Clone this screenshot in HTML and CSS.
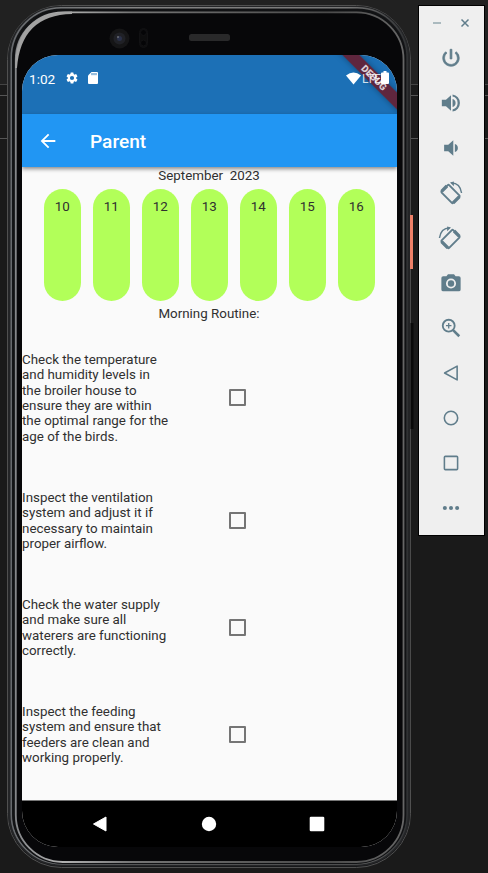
FILE: index.html
```html
<!DOCTYPE html>
<html lang="en">
<head>
<meta charset="utf-8">
<title>Parent</title>
<link rel="stylesheet" href="styles.css">
</head>
<body>
<div class="desktop">
  <div class="phone">
    <svg class="frame" width="414" height="873" viewBox="0 0 414 873" fill="none">
      <defs>
        <linearGradient id="shine" x1="0" y1="0" x2="1" y2="0">
          <stop offset="0" stop-color="#85878a"/><stop offset=".12" stop-color="#b2b2b2"/><stop offset=".3" stop-color="#757575"/><stop offset=".8" stop-color="#4a4a4a"/><stop offset="1" stop-color="#666"/>
        </linearGradient>
        <linearGradient id="rim" x1="0" y1="0" x2="1" y2="0">
          <stop offset="0" stop-color="#66696d"/><stop offset=".3" stop-color="#858585"/><stop offset=".85" stop-color="#777"/><stop offset="1" stop-color="#303234"/>
        </linearGradient>
      </defs>
      <rect x="7.500" y="5.500" width="403" height="862" rx="54" fill="#17181a" stroke="#505050"/>
      <rect x="9" y="7" width="400" height="858" rx="52" stroke="#242527" stroke-width="2"/>
      <rect x="11.200" y="7.700" width="396" height="856" rx="50" stroke="url(#rim)" stroke-width="1.600"/>
      <rect x="13.500" y="10" width="391.500" height="853" rx="49" stroke="#111214" stroke-width="2"/>
      <rect x="15.800" y="12.300" width="387.700" height="849.700" rx="47" fill="#070709" stroke="url(#shine)" stroke-width="1.800"/>
      <path d="M15 68Q15 11.500 72 11.500V14Q21 15 17 68z" fill="#a2a2a2"/>
      <circle cx="119.500" cy="38.500" r="10" fill="#151516"/>
      <circle cx="119.500" cy="38.500" r="6" fill="#202126"/>
      <circle cx="119.500" cy="38.500" r="2.500" fill="#2a3048"/>
      <circle cx="118" cy="37" r=".8" fill="#999"/>
      <rect x="139.500" y="28.500" width="8" height="19" rx="4" fill="#0d0d0e" stroke="#111113"/>
      <circle cx="143.500" cy="32.500" r="3" fill="#050507" stroke="#121214"/>
      <circle cx="143.500" cy="43" r="3" fill="#050507" stroke="#121214"/>
      <rect x="189" y="34" width="41" height="7" rx="2.500" fill="#29292a"/>
      <path d="M410.500 80v710" stroke="#4b4b4b"/>
      <path d="M412 323v106" stroke="#090909" stroke-width="3"/>
    </svg>
    <span class="power-key"></span>
    <main class="screen">
      <header class="status">
        <span class="clock">1:02</span>
        <svg class="gear" width="14" height="14" viewBox="0 0 24 24" fill="#fff"><path d="M19.140 12.940a7 7 0 0 0 0-1.880l2.030-1.580a.5.5 0 0 0 .12-.61l-1.920-3.320a.5.5 0 0 0-.59-.22l-2.390.96a7 7 0 0 0-1.620-.94L14.400 2.810a.5.5 0 0 0-.48-.41h-3.840a.5.5 0 0 0-.47.41L9.250 5.350a7 7 0 0 0-1.620.94l-2.390-.96a.5.5 0 0 0-.59.22L2.740 8.870a.5.5 0 0 0 .12.61l2.030 1.580a7 7 0 0 0 0 1.880l-2.030 1.580a.5.5 0 0 0-.12.61l1.920 3.320c.12.22.37.29.59.22l2.390-.96c.5.380 1.030.7 1.620.94l.36 2.540c.05.24.24.41.48.41h3.840c.24 0 .44-.17.47-.41l.36-2.540a7 7 0 0 0 1.620-.94l2.390.96c.22.08.47 0 .59-.22l1.920-3.320a.5.5 0 0 0-.12-.61zM12 15.600a3.600 3.600 0 1 1 0-7.200 3.600 3.600 0 0 1 0 7.200z"/></svg>
        <svg class="sd" width="10" height="12" viewBox="0 0 10 12"><path d="M3.500 0H9q1 0 1 1v10q0 1-1 1H1q-1 0-1-1V3.500z" fill="#fff"/><path d="M4 1v2.200M6 1v2.200M8 1v2.200" stroke="#1c70b6" stroke-width=".9"/></svg>
        <span class="signals">
          <svg width="15" height="13" viewBox="0 0 15 13"><path d="M0 3.500Q7.500-2.500 15 3.500L7.500 12.500z" fill="#fff"/></svg>
          <span class="lte">LTE</span>
          <svg class="battery" width="8" height="13" viewBox="0 0 8 13"><path d="M2.500 0h3v1.500H7q1 0 1 1V12q0 1-1 1H1q-1 0-1-1V2.500q0-1 1-1h1.500z" fill="#fff"/></svg>
        </span>
        <span class="debug">DEBUG</span>
      </header>
      <nav class="appbar">
        <svg width="22" height="22" viewBox="0 0 24 24" fill="#fff"><path d="M20 11H7.830l5.590-5.590L12 4l-8 8 8 8 1.410-1.410L7.830 13H20z"/></svg>
        <h1>Parent</h1>
      </nav>
      <section class="content">
        <div class="month">September&nbsp; 2023</div>
        <div class="days">
          <span class="day">10</span><span class="day">11</span><span class="day">12</span><span class="day">13</span><span class="day">14</span><span class="day">15</span><span class="day">16</span>
        </div>
        <div class="routine">Morning Routine:</div>
        <div class="task"><p>Check the temperature<br>and humidity levels in<br>the broiler house to<br>ensure they are within<br>the optimal range for the<br>age of the birds.</p><span class="box"></span></div>
        <div class="task"><p>Inspect the ventilation<br>system and adjust it if<br>necessary to maintain<br>proper airflow.</p><span class="box"></span></div>
        <div class="task"><p>Check the water supply<br>and make sure all<br>waterers are functioning<br>correctly.</p><span class="box"></span></div>
        <div class="task"><p>Inspect the feeding<br>system and ensure that<br>feeders are clean and<br>working properly.</p><span class="box"></span></div>
      </section>
      <footer class="navbar">
        <svg width="16" height="16" viewBox="0 0 16 16"><path d="M14 1v14L1.500 8z" fill="#fff" stroke="#fff" stroke-linejoin="round"/></svg>
        <svg width="16" height="16" viewBox="0 0 16 16"><circle cx="8" cy="8" r="7.200" fill="#fff"/></svg>
        <svg width="16" height="16" viewBox="0 0 16 16"><rect x=".7" y=".7" width="14.600" height="14.600" rx="1.300" fill="#fff"/></svg>
      </footer>
    </main>
  </div>
  <aside class="tools">
    <div class="window-keys">
      <svg width="10" height="10" viewBox="0 0 10 10"><path d="M1 5h8" stroke="#9aacb3" stroke-width="1.600"/></svg>
      <svg width="10" height="10" viewBox="0 0 10 10"><path d="M1.500 1.500l7 7m0-7l-7 7" stroke="#607d8b" stroke-width="1.500"/></svg>
    </div>
    <div class="tool"><svg viewBox="0 0 24 24"><path d="M13 2.500h-2v10.500h2zm4.830 2.670l-1.420 1.420A6.920 6.920 0 0 1 19 12a7 7 0 1 1-11.420-5.420L6.170 5.170A9 9 0 1 0 21 12a8.900 8.900 0 0 0-3.170-6.830z" stroke="#607d8b" stroke-width=".8"/></svg></div>
    <div class="tool"><svg viewBox="0 0 24 24"><path d="M2 8.500v7h4.500l5.500 5V3.500L6.500 8.500zM17 12a4.500 4.500 0 0 0-3.300-4.300v8.600A4.500 4.500 0 0 0 17 12zM13.700 2.700v2.300a7.200 7.200 0 0 1 0 14v2.300a9.400 9.400 0 0 0 0-18.600z"/></svg></div>
    <div class="tool"><svg viewBox="0 0 24 24"><path d="M19.500 12A4.500 4.500 0 0 0 16.200 7.700v8.600A4.500 4.500 0 0 0 19.500 12zM4.500 8.500v7H9l5.500 5V3.500L9 8.500z"/></svg></div>
    <div class="tool"><svg class="wide" viewBox="0 0 26 26"><g id="rotate"><rect x="7.500" y="5" width="11" height="17" rx="1" transform="rotate(-45 13 13.500)" fill="none" stroke="#607d8b" stroke-width="2"/><path d="M2.500 9.500l5.500-5.500 2.500 2.500-5.500 5.500zM14.500 21.500l6.500-6.500 2.500 2.500-6.500 6.500z"/><path d="M14 2Q23 2 24.500 12.500" fill="none" stroke="#607d8b" stroke-width="1.500"/><path d="M12.500 1.500l4-1v5z"/></g></svg></div>
    <div class="tool"><svg class="wide" viewBox="0 0 26 26"><use href="#rotate" transform="translate(26 0) scale(-1 1)"/></svg></div>
    <div class="tool"><svg viewBox="0 0 24 24"><circle cx="12" cy="12.500" r="3.500"/><path d="M8.700 2.500L7 4.500H3.500a2 2 0 0 0-2 2V19a2 2 0 0 0 2 2h17a2 2 0 0 0 2-2V6.500a2 2 0 0 0-2-2H17l-1.700-2zM12 18a5.500 5.500 0 1 1 0-11 5.500 5.500 0 0 1 0 11z" fill-rule="evenodd"/></svg></div>
    <div class="tool"><svg viewBox="0 0 24 24"><g fill="none" stroke="#607d8b"><circle cx="9.500" cy="9.500" r="6.500" stroke-width="2"/><path d="M14 14l7 7" stroke-width="2.800"/><path d="M9.500 6.500v6M6.500 9.500h6" stroke-width="1.400"/></g></svg></div>
    <div class="tool"><svg viewBox="0 0 24 24"><path d="M18.700 4.500v15L5 12z" fill="none" stroke="#607d8b" stroke-width="1.700" stroke-linejoin="round"/></svg></div>
    <div class="tool"><svg viewBox="0 0 24 24"><circle cx="12" cy="12" r="7.300" fill="none" stroke="#607d8b" stroke-width="1.700"/></svg></div>
    <div class="tool"><svg viewBox="0 0 24 24"><rect x="4.800" y="4.800" width="14.400" height="14.400" rx="1" fill="none" stroke="#607d8b" stroke-width="1.700"/></svg></div>
    <div class="tool"><svg viewBox="0 0 24 24"><circle cx="5.300" cy="12" r="2.200"/><circle cx="12" cy="12" r="2.200"/><circle cx="18.700" cy="12" r="2.200"/></svg></div>
  </aside>
</div>
</body>
</html>
```
FILE: styles.css
```css
* { box-sizing: border-box; }
body { margin: 0; font-family: Roboto, sans-serif; }
p, h1 { margin: 0; }
svg { display: block; flex: none; }
.desktop {
  display: flex;
  width: 488px;
  height: 873px;
  overflow: hidden;
  background:
    linear-gradient(#444, #444) 0 84px / 100% 1px no-repeat,
    linear-gradient(#555, #555) 0 95px / 100% 1px no-repeat,
    linear-gradient(#555, #555) 0 138px / 100% 1px no-repeat,
    linear-gradient(#212121 84px, #1a1a1a 84px);
}
.phone { position: relative; width: 412px; padding: 55px 15px 26px 22px; }
.frame { position: absolute; left: 0; top: 0; }
.power-key { position: absolute; left: 410px; top: 215px; width: 3px; height: 54px; background: #ee8068; }
.screen {
  position: relative;
  display: flex;
  flex-direction: column;
  width: 375px;
  height: 792px;
  border-radius: 36px;
  overflow: hidden;
  background: #fafafa;
}
.status {
  position: relative;
  display: flex;
  height: 59px;
  padding: 16px 8px 0 7px;
  background: #1c70b6;
  color: #fff;
}
.clock { width: 36px; font-size: 13.600px; line-height: 16px; }
.sd { margin: 1px 0 0 9px; }
.signals { position: relative; display: flex; margin: 1px 0 0 auto; height: 13px; }
.signals svg { position: relative; z-index: 1; }
.signals { z-index: 1; }
.lte { width: 20px; padding-left: 1px; font-size: 12px; line-height: 14px; overflow: hidden; opacity: 0.800; }
.battery { margin-top: -1px; }
.debug {
  position: absolute;
  right: -32px;
  top: 16.500px;
  width: 110px;
  height: 11.500px;
  transform: rotate(45deg);
  background: rgba(112, 20, 32, 0.800);
  box-shadow: 0 0 6px rgba(0, 0, 0, 0.350);
  color: rgba(255, 255, 255, 0.780);
  font-size: 9.800px;
  font-weight: 900;
  line-height: 12px;
  text-align: center;
}
.appbar {
  position: relative;
  display: flex;
  align-items: center;
  flex: none;
  height: 53px;
  padding: 1px 15px 0;
  background: #2196f3;
  box-shadow: 0 2px 4px rgba(0, 0, 0, 0.450);
  color: #fff;
}
.appbar h1 { margin-left: 31px; padding-top: 1px; font-size: 19.100px; font-weight: 500; line-height: 24px; }
.content {
  flex: 1;
  color: #303030;
  font-size: 13.370px;
  line-height: 15.400px;
}
.month, .routine { padding-right: 1px; text-align: center; }
.month { height: 21.500px; padding-top: 1px; }
.days { display: flex; justify-content: center; gap: 11.500px; padding-right: 0.500px; }
.day { width: 37.500px; height: 112px; padding-top: 10px; border-radius: 19px; background: #b2ff59; text-align: center; }
.routine { height: 28.500px; padding-top: 5.500px; }
.task { display: flex; align-items: center; padding: 22.750px 0; }
.task p { width: 206.600px; white-space: nowrap; }
.box { width: 17px; height: 17px; border: 2px solid #757575; border-radius: 1px; }
.navbar {
  display: flex;
  justify-content: space-between;
  flex: none;
  height: 47px;
  padding: 15px 72px 0 70px;
  border-top: 1px solid #777;
  background: #000;
}
.tools {
  width: 67px;
  height: 531px;
  margin: 5px 0 0 6px;
  padding-right: 2px;
  border: 1px solid #000;
  background: #efefef;
}
.window-keys { display: flex; align-items: center; justify-content: center; gap: 18px; height: 29.500px; padding-top: 5px; }
.tool { display: flex; align-items: center; justify-content: center; height: 45px; }
.tool svg { width: 22px; height: 22px; fill: #607d8b; }
.tool .wide { width: 25px; height: 25px; }
```
